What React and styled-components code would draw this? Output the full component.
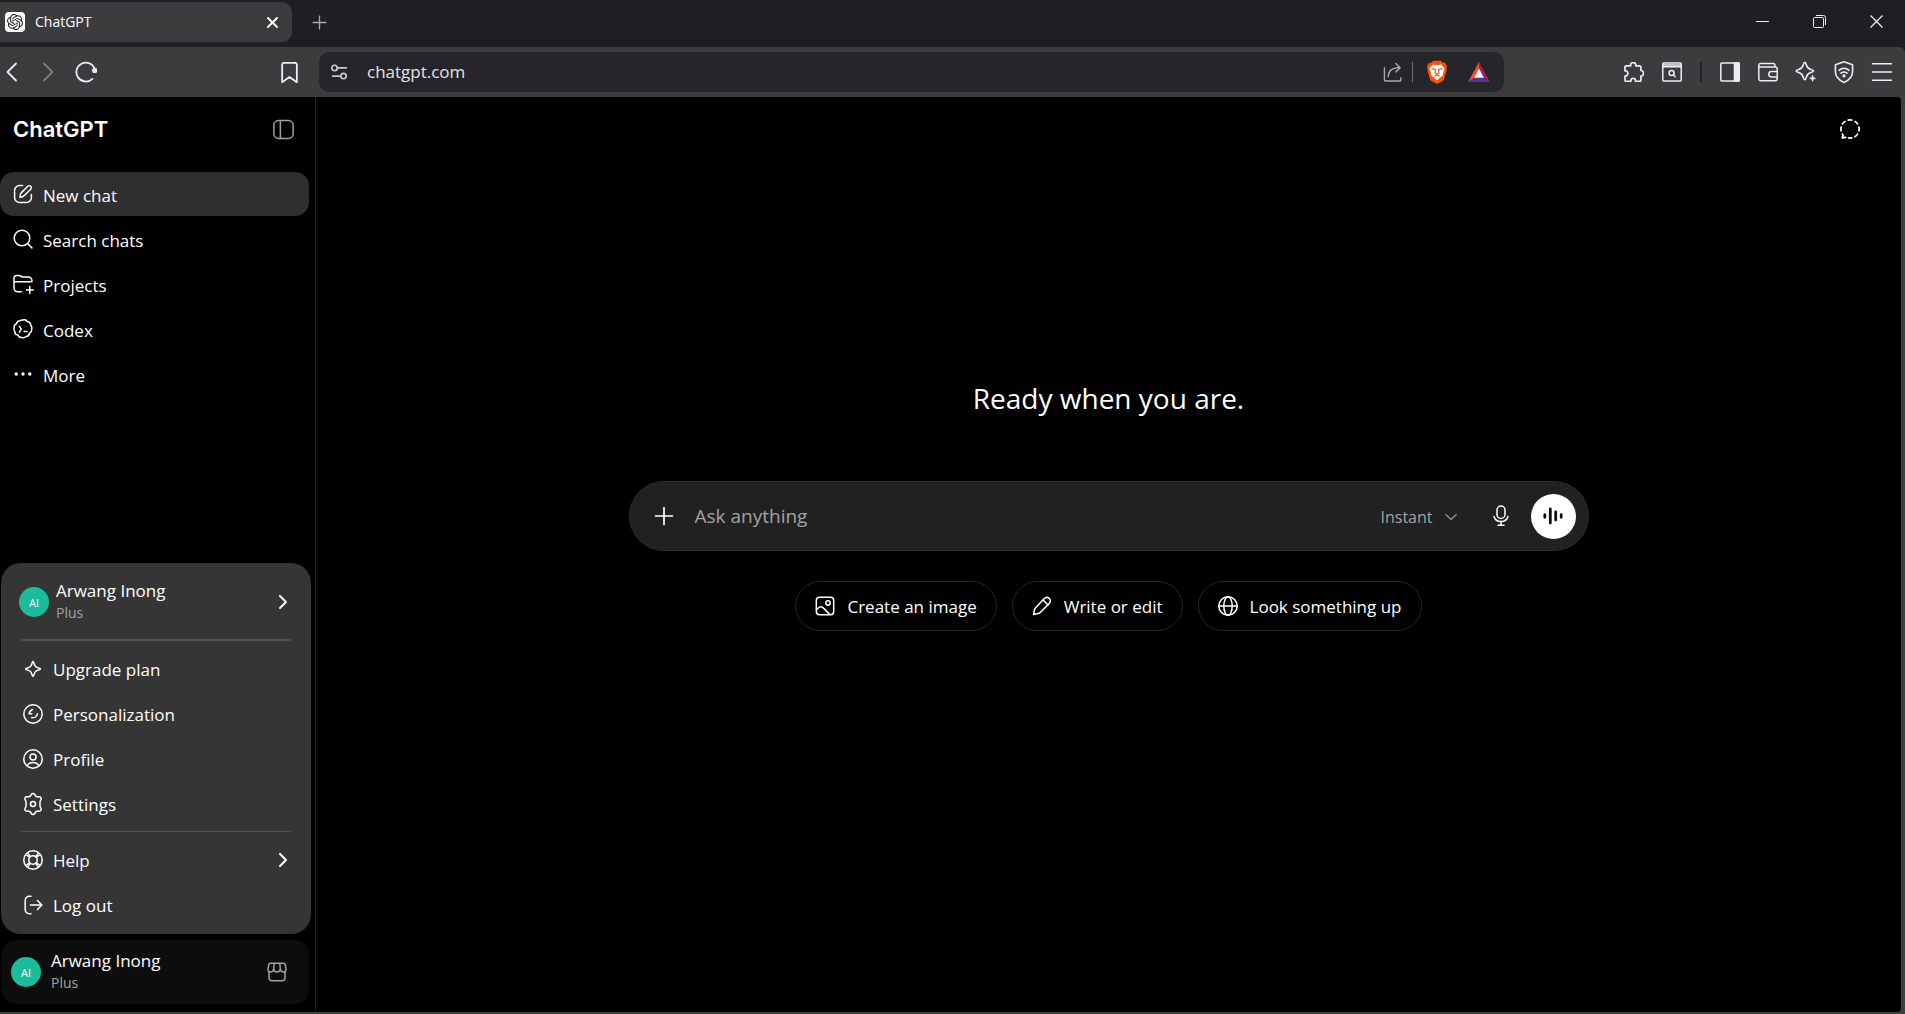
import React from "react";
import styled, { createGlobalStyle } from "styled-components";
import { SiOpenai } from "react-icons/si";

const uiFont = `"Open Sans", "Noto Sans", sans-serif`;

const GlobalStyle = createGlobalStyle`
  * { box-sizing: border-box; }
  body { margin: 0; background: #3c3b3e; font-family: ${uiFont}; color: #fff; }
  button, input, select { font: inherit; color: inherit; background: none; border: 0; padding: 0; margin: 0; outline: 0; }
  button { cursor: pointer; }
  a { color: inherit; text-decoration: none; }
  svg { display: block; flex: none; }
  h1, p { margin: 0; }
`;

/* ---------- icons ---------- */

const Line = ({ size = 20, w = 1.5, children, ...rest }) => (
  <svg width={size} height={size} viewBox="0 0 20 20" fill="none" stroke="currentColor"
    strokeWidth={w} strokeLinecap="round" strokeLinejoin="round" aria-hidden="true" {...rest}>
    {children}
  </svg>
);

const icons = {
  edit: <><path d="M9.5 1.6H6.6a5 5 0 0 0-5 5v6.8a5 5 0 0 0 5 5h6.8a5 5 0 0 0 5-5v-2.9" /><path d="M7 13.2c-.1-1.700.3-3.400 1.500-4.600l6.300-6.300a2.050 2.050 0 0 1 2.900 2.900l-6.300 6.300c-1.200 1.200-2.700 1.700-4.400 1.700z" /></>,
  search: <><circle cx="9" cy="9" r="7.800" /><path d="M14.700 14.700l4.200 4.200" /></>,
  project: <><path d="M8.500 17.800H4.700A3.700 3.700 0 0 1 1 14.100V4.200A2.600 2.600 0 0 1 3.600 1.600h2.200c2.200 0 2 1.300 4.200 1.300h5.300A3.600 3.600 0 0 1 18.900 6.500v1.300H1" /><path d="M16.800 12.600v6.800M13.400 16h6.800" /></>,
  codex: <><path d="M10 1c1.500-.6 3.500 0 4.300 1.600 1.700.3 3.400 1.600 3.500 3.600.9 1.200 1.500 2.300 1 4.100 0 1.900-.6 3-2.100 3.700-.4 1.800-1.500 3.300-3.400 3.500-1.200.9-2.900 1.600-4.400.9-1.900.1-3.300-.7-4.100-2.300-1.700-.4-3.100-1.800-3.100-3.700C.9 11.200.5 9.800 1.100 8.400 1.100 6.500 2 5.300 3.500 4.600 3.900 2.900 5.300 1.700 7.200 1.700 8 1.100 9 .8 10 1z" /><path d="M6.500 7.300l1.700 2.900-1.700 2.900M11 12.500h3" /></>,
  more: <g fill="currentColor" stroke="none"><circle cx="3.200" cy="10" r="1.700" /><circle cx="10" cy="10" r="1.700" /><circle cx="16.800" cy="10" r="1.700" /></g>,
  sidebar: <><rect x=".8" y="1.500" width="18.400" height="17" rx="4.500" /><path d="M7 1.500v17" /></>,
  spark: <path d="M10 2.500c.6 0 .9 1.700 1.600 3.500.5 1.300 1.100 1.900 2.400 2.400 1.800.7 3.500 1 3.500 1.600s-1.700.9-3.500 1.600c-1.300.5-1.900 1.100-2.400 2.400-.7 1.800-1 3.500-1.600 3.500s-.9-1.700-1.600-3.500c-.5-1.300-1.100-1.900-2.400-2.400-1.800-.7-3.500-1-3.500-1.600s1.700-.9 3.500-1.600C7.300 7.900 7.900 7.300 8.400 6c.7-1.800 1-3.500 1.600-3.500z" />,
  personal: <><circle cx="10" cy="10" r="9.200" /><path d="M9.500 5.500C8 6.200 6.300 8 6.100 9.800h2.700M14.400 9.800c-.5 2.500-2.900 4.300-5.700 4" /></>,
  profile: <><circle cx="10" cy="10" r="9.200" /><circle cx="10" cy="7.900" r="3" /><path d="M4 16.800c1.200-2.200 3.400-3.300 6-3.300s4.800 1.100 6 3.300" /></>,
  gear: <><path d="M8.300.5a2 2 0 0 1 3.400 0l.9 1.500 1.700.9 1.800-.1a2 2 0 0 1 1.800 3.100l-.9 1.600v5l.9 1.600a2 2 0 0 1-1.800 3.100l-1.800-.1-1.700.9-.9 1.500a2 2 0 0 1-3.400 0l-.9-1.500-1.700-.9-1.800.1a2 2 0 0 1-1.800-3.100l.9-1.600v-5l-.9-1.600a2 2 0 0 1 1.800-3.100l1.800.1 1.700-.9z" /><circle cx="10" cy="10" r="2.500" /></>,
  help: <><circle cx="10" cy="10" r="9.200" /><circle cx="10" cy="10" r="4.200" /><path d="M3.600 5l3.100 2.400M5 3.600l2.400 3.100M15 3.600l-2.400 3.100M16.400 5l-3.100 2.400M16.400 15l-3.100-2.400M15 16.400l-2.400-3.100M5 16.400l2.400-3.100M3.600 15l3.100-2.400" /></>,
  logout: <><path d="M8 1.300H6.200a4 4 0 0 0-4 4v9.400a4 4 0 0 0 4 4H8" /><path d="M7.500 10h11M14.500 5.600l4.300 4.400-4.300 4.400" /></>,
  store: <><path d="M2 9.500v6.200a3 3 0 0 0 3 3h10a3 3 0 0 0 3-3V9.500" /><path d="M3.600 1.300h12.800c1.200 0 1.700.7 1.900 1.800l.7 3.700c.3 1.900-1 3.300-2.500 3.300-1.700 0-3.100-1.400-3.200-3.300-.1 1.900-1.500 3.300-3.300 3.300S6.800 8.700 6.700 6.800c-.1 1.900-1.500 3.300-3.200 3.300C2 10.100.7 8.700 1 6.800l.7-3.700c.2-1.100.7-1.800 1.900-1.800zM6.700 6.800l.5-5.300M13.300 6.800l-.5-5.300" /></>,
  chevron: <path d="M7 4l6 6-6 6" />,
  down: <path d="M3.500 7l6.500 6 6.500-6" />,
  plus: <path d="M10 1.500v17M1.500 10h17" />,
  mic: <><rect x="6" y="0" width="8" height="12.400" rx="4" /><path d="M3 10.500c.8 3 3.600 5 7 5s6.200-2 7-5M10 15.500v3.700M7 19.300h6" /></>,
  voice: <g strokeWidth="2.800"><path d="M1.800 8.700v2.600M7.300 3v14M12.700 6v8M18.200 8.700v2.600" /></g>,
  image: <><rect x="1.300" y="1.300" width="17.400" height="17.400" rx="3.200" /><circle cx="13" cy="7" r="2.200" /><path d="M1.500 13.800c3.500-4 5-3.700 7.500-1.200l5.800 5.800" /></>,
  pen: <><path d="M1.500 18.500l.9-4.500c.2-1 .6-1.600 1.200-2.300l8.700-9.200c1.400-1.400 3.500-1.500 4.900-.1 1.500 1.400 1.500 3.500.1 5L8.500 16.200c-.7.700-1.400 1.100-2.300 1.300z" /><path d="M11 4l5 5" /></>,
  globe: <><circle cx="10" cy="10" r="9.200" /><ellipse cx="10" cy="10" rx="4.200" ry="9.200" /><path d="M.8 10h18.400" /></>,
  temp: <><path d="M8.200 1.100a9.200 9.200 0 0 1 3.600 0M15 2.400a9 9 0 0 1 2.600 2.500M18.900 8.200a9 9 0 0 1 0 3.700M17.600 15.100a9 9 0 0 1-2.600 2.600M11.800 18.900a9 9 0 0 1-3.200 0M5 2.400a9 9 0 0 0-2.600 2.500M1.100 8.200a9 9 0 0 0 0 3.700M2.300 15l.8 1.300-.9 2.600 3.600-.5" /></>,
  close: <path d="M3 3l14 14M17 3L3 17" />,
  back: <path d="M14 1.500L5.500 10l8.500 8.500" />,
  forward: <path d="M6 1.500l8.500 8.500L6 18.500" />,
  reload: <><path d="M15.900 16.200A8.600 8.600 0 1 1 18 7.200" /><circle cx="18" cy="8.600" r="2.400" fill="currentColor" stroke="none" /></>,
  bookmark: <path d="M3 2.500A2 2 0 0 1 5 .7h10a2 2 0 0 1 2 1.800v16.800l-7-5-7 5z" />,
  tune: <><circle cx="5" cy="5.500" r="3" /><path d="M8.500 5.500H18M3 14.500h8.500" /><circle cx="15" cy="14.500" r="3" /></>,
  share: <><path d="M1.500 5v12a2 2 0 0 0 2 2h13.300a2 2 0 0 0 2-2v-1.200" /><path d="M5.500 14.500c0-5.500 3.500-9 9.500-9.500h3M13.500.6l4.600 4.400-4.600 4.400" /></>,
  puzzle: <path d="M2.200 3.800h4.500C6.200 1.800 7.300.6 9.200.6s3 1.200 2.500 3.200h4a1.200 1.200 0 0 1 1.200 1.200v3.500c1.800.1 2.700 1.200 2.700 2.700s-.9 2.700-2.700 2.800v4.200a1.200 1.200 0 0 1-1.200 1.200h-4.200c.2-2-.6-3.100-2.300-3.100s-2.500 1.100-2.300 3.100H2.200A1.200 1.200 0 0 1 1 18.200V14c1.700.2 2.800-.9 2.800-2.600S2.700 8.700 1 8.900V5a1.200 1.200 0 0 1 1.200-1.200z" />,
  finder: <><rect x=".8" y="1" width="18.400" height="18" rx="1" /><path d="M1 4.800h18M1 3h18" /><circle cx="9.600" cy="11" r="2.500" /><path d="M11.500 13l1.700 1.800" /></>,
  panel: <><rect x=".8" y="1" width="18.400" height="18" rx="1" /><path fill="currentColor" d="M14.500 1h4.500v18h-4.500z" /></>,
  wallet: <><path d="M17 5V3.500a2 2 0 0 0-2-2H2.500A1.700 1.700 0 0 0 .8 3.200v13.600a2 2 0 0 0 2 2h14.400a2 2 0 0 0 2-2V7a2 2 0 0 0-2-2H1M19 9.500h-5.500a2.700 2.700 0 0 0 0 5.400H19" /></>,
  leo: <><path d="M8.800.2c.7 0 1 .6 1.600 2.800.8 2.900 1.600 3.600 4.400 4.400 2.200.6 2.800.9 2.800 1.600s-.6 1-2.800 1.600c-2.800.8-3.600 1.600-4.400 4.400-.6 2.200-.9 2.800-1.600 2.800s-1-.6-1.600-2.800c-.8-2.800-1.600-3.600-4.400-4.400C.6 10 0 9.700 0 9s.6-1 2.800-1.600C5.600 6.600 6.400 5.900 7.200 3 7.800.8 8.100.2 8.800.2z" /><path fill="currentColor" strokeWidth=".5" d="M16.600 13.200l.9 2.200 2.200.9-2.200.9-.9 2.200-.9-2.200-2.200-.9 2.200-.9z" /></>,
  shield: <><path d="M10-.2l8.600 3v6.700c0 5.300-3.300 8.600-8.600 10.900C4.700 18.100 1.400 14.800 1.400 9.500V2.800z" /><path d="M5 8.300c3-2.700 7-2.700 10 0M7 11.200c1.900-1.500 4.100-1.500 6 0" /><circle cx="10" cy="13.800" r=".8" fill="currentColor" /></>,
  menu: <path d="M.5 1.800h19M.5 10h19M.5 18.200h19" />,
};

const Icon = ({ name, ...rest }) => <Line {...rest}>{icons[name]}</Line>;

const BraveLogo = () => (
  <svg width="20" height="24" viewBox="0 0 20 24" aria-hidden="true">
    <path d="M6.200.8h7.600l1.800 2h2.200L20 6l-.6 2 .4 1.500-2.600 9c-.4 1.400-1.200 2.200-2.300 3L10 24l-4.900-2.500c-1.100-.8-1.900-1.600-2.300-3L.2 9.500.6 8 0 6l2.200-3.200h2.200z" fill="#fb5209" />
    <path d="M6 4.500l4 .8 4-.8 3.600 3.900-1.200 3.200-.6 3.800-3.200 2.500L10 20.500l-2.600-2.600-3.200-2.500-.6-3.800-1.200-3.200z" fill="#fff" />
    <path d="M4.600 8.600l3.900.9-.4 3.600 1.900 1 1.900-1-.4-3.600 3.900-.9M7.300 16.300L10 15l2.700 1.300" fill="none" stroke="#fb5209" strokeWidth="1.200" />
  </svg>
);

const BatLogo = () => (
  <svg width="22" height="20" viewBox="0 0 22 20" aria-hidden="true">
    <path d="M11 0L0 20l7-4.500L11 8z" fill="#ff4a2b" />
    <path d="M11 0l11 20-7-4.500L11 8z" fill="#9e1f63" />
    <path d="M0 20h22l-7-4.500H7z" fill="#5b2f9c" />
    <path d="M11 6.500L6.200 15.700h9.600z" fill="#fff" />
  </svg>
);

/* ---------- browser chrome ---------- */

const Window = styled.div`
  display: flex;
  flex-direction: column;
  height: 100vh;
  background: #1f1e23;
`;

const TabStrip = styled.div`
  display: flex;
  align-items: center;
  height: 47px;
  padding: 2px 0 5px;
`;

const Tab = styled.div`
  display: flex;
  align-items: center;
  width: 292px;
  height: 40px;
  padding: 0 13px 0 5px;
  gap: 10px;
  background: #3c3b3e;
  border-radius: 0 10px 10px 0;
  font-size: 14px;
`;

const Favicon = styled.span`
  display: grid;
  place-items: center;
  width: 20px;
  height: 20px;
  border-radius: 4px;
  background: #fff;
  color: #222;
`;

const TabTitle = styled.span`
  flex: 1;
  padding-bottom: 2px;
`;

const IconButton = styled.button`
  display: grid;
  place-items: center;
  width: ${(p) => p.$w || 38}px;
  height: ${(p) => p.$h || 38}px;
  color: ${(p) => p.$color || "#eeedf2"};
`;

const WindowControls = styled.div`
  display: flex;
  margin-left: auto;
  padding-bottom: 2px;
`;

const Toolbar = styled.div`
  display: flex;
  align-items: center;
  height: 50px;
  background: #3c3b3e;
  border-radius: 0 6px 0 0;
`;

const NavButtons = styled.div`
  display: flex;
  align-items: center;
  width: 319px;
  padding-right: 11px;
`;

const BookmarkSlot = styled.div`
  margin-left: auto;
`;

const AddressBar = styled.div`
  display: flex;
  align-items: center;
  flex: 1;
  height: 40px;
  padding: 0 6px 0 1px;
  border-radius: 10px;
  background: #262529;
`;

const AddressInput = styled.input`
  flex: 1;
  min-width: 0;
  padding: 0 0 2px 9px;
  font-size: 17px;
  color: #e4e3e8;
`;

const Divider = styled.span`
  width: ${(p) => p.$w}px;
  height: 20px;
  margin: 0 ${(p) => p.$gap}px;
  background: ${(p) => p.$color};
`;

const Extensions = styled.div`
  display: flex;
  align-items: center;
  justify-content: flex-end;
  width: 401px;
  padding-right: 4px;
`;

/* ---------- page ---------- */

const Viewport = styled.div`
  display: flex;
  flex: 1;
  min-height: 0;
  padding: 0 4px 2px 0;
  background: #3f3f41;
`;

const Page = styled.div`
  display: flex;
  flex: 1;
  border-radius: 0 4px 4px 0;
  background: #000;
`;

const Sidebar = styled.aside`
  display: flex;
  flex-direction: column;
  width: 316px;
  border-right: 1px solid #212121;
`;

const SidebarHeader = styled.div`
  display: flex;
  align-items: center;
  justify-content: space-between;
  height: 64px;
  padding: 0 13px;
`;

const Brand = styled.a`
  font-family: Inter, sans-serif;
  font-size: 22px;
  font-weight: 600;
`;

const Nav = styled.nav`
  display: flex;
  flex-direction: column;
  gap: 1px;
  padding: 11px 6px 0 0;
`;

const NavItem = styled.a`
  display: flex;
  align-items: center;
  gap: 10px;
  height: 44px;
  padding: 0 13px;
  border-radius: 14px;
  background: ${(p) => (p.$active ? "#2f2f2f" : "transparent")};
  font-size: 17px;
`;

const SidebarFooter = styled.div`
  position: relative;
  margin-top: auto;
  padding: 0 6px 8px 2px;
`;

const AccountCard = styled.button`
  display: flex;
  align-items: center;
  gap: 10px;
  width: 100%;
  height: 64px;
  padding: 0 22px 0 9px;
  border-radius: 14px;
  background: #0d0d0d;
  text-align: left;
`;

const Avatar = styled.span`
  display: grid;
  place-items: center;
  width: 30px;
  height: 30px;
  border-radius: 50%;
  background: #1abc9c;
  font-size: 11px;
`;

const Identity = styled.span`
  display: flex;
  flex-direction: column;
  flex: 1;
`;

const UserName = styled.span`
  font-size: 17px;
  line-height: 22px;
`;

const UserPlan = styled.span`
  font-size: 14px;
  line-height: 22px;
  color: #a3a3a3;
`;

const Popover = styled.div`
  position: absolute;
  bottom: 78px;
  left: 1px;
  display: flex;
  flex-direction: column;
  width: 310px;
  padding: 9px 8px 7px;
  border-radius: 20px;
  background: #353535;
`;

const PopoverAccount = styled.button`
  display: flex;
  align-items: center;
  gap: 7px;
  height: 60px;
  padding: 0 10px;
  text-align: left;
`;

const PopoverRule = styled.hr`
  width: 270px;
  height: ${(p) => p.$h}px;
  margin: ${(p) => p.$m};
  border: 0;
  background: #505050;
`;

const PopoverItem = styled.button`
  display: flex;
  align-items: center;
  gap: 10px;
  height: 45px;
  padding: 0 10px 0 14px;
  font-size: 17px;
`;

const ItemLabel = styled.span`
  flex: 1;
  padding-top: 2px;
  text-align: left;
`;

const Main = styled.main`
  display: flex;
  flex: 1;
  flex-direction: column;
`;

const MainHeader = styled.header`
  display: flex;
  align-items: center;
  justify-content: flex-end;
  height: 64px;
  padding-right: 32px;
`;

const Welcome = styled.section`
  display: flex;
  flex: 1;
  flex-direction: column;
  align-items: center;
  justify-content: center;
  padding: 0 24px 164px;
`;

const Heading = styled.h1`
  margin-bottom: 63px;
  font-size: 28px;
  font-weight: 400;
  line-height: 40px;
`;

const Composer = styled.form`
  display: flex;
  align-items: center;
  width: 100%;
  max-width: 960px;
  height: 70px;
  padding: 0 12px 0 15px;
  border: 1px solid #2c2c2c;
  border-radius: 35px;
  background: #212121;
`;

const Prompt = styled.input`
  flex: 1;
  min-width: 0;
  padding-left: 12px;
  font-size: 19px;
  &::placeholder { color: #a3a3a3; opacity: 1; }
`;

const ModelPicker = styled.label`
  display: flex;
  align-items: center;
  gap: 9px;
  margin-right: 23px;
  padding-top: 2px;
  color: #a3a3a3;
`;

const ModelSelect = styled.select`
  appearance: none;
  font-size: 16px;
`;

const VoiceButton = styled.button`
  display: grid;
  place-items: center;
  width: 45px;
  height: 45px;
  margin-left: 11px;
  border-radius: 50%;
  background: #fff;
  color: #0d0d0d;
`;

const Suggestions = styled.div`
  display: flex;
  gap: 15px;
  margin-top: 30px;
`;

const Chip = styled.button`
  display: flex;
  align-items: center;
  gap: 12px;
  height: 50px;
  padding: 0 19px;
  border: 1px solid #262626;
  border-radius: 25px;
  font-size: 17px;
`;

const navItems = [
  ["edit", "New chat"],
  ["search", "Search chats"],
  ["project", "Projects"],
  ["codex", "Codex"],
  ["more", "More"],
];

const accountItems = [
  ["spark", "Upgrade plan"],
  ["personal", "Personalization"],
  ["profile", "Profile"],
  ["gear", "Settings"],
];

const suggestions = [
  ["image", "Create an image"],
  ["pen", "Write or edit"],
  ["globe", "Look something up"],
];

const extensionIcons = [
  ["leo", "Leo AI"],
  ["shield", "VPN"],
  ["menu", "Menu"],
];

const User = () => (
  <Identity>
    <UserName>Arwang Inong</UserName>
    <UserPlan>Plus</UserPlan>
  </Identity>
);

function BrowserChrome() {
  return (
    <>
      <TabStrip>
        <Tab>
          <Favicon><SiOpenai size={16} /></Favicon>
          <TabTitle>ChatGPT</TabTitle>
          <IconButton $w={14} aria-label="Close tab" $color="#fff"><Icon name="close" size={13} w={3} /></IconButton>
        </Tab>
        <IconButton $w={54} aria-label="New tab" $color="#a9a8ad"><Icon name="plus" size={15} w={1.800} /></IconButton>
        <WindowControls>
          <IconButton $w={57} aria-label="Minimize">
            <svg width="13" height="13"><path d="M0 6.500h13" stroke="currentColor" /></svg>
          </IconButton>
          <IconButton $w={57} aria-label="Restore">
            <svg width="13" height="13" fill="none" stroke="currentColor"><rect x=".5" y="2.500" width="10" height="10" rx="1" /><path d="M3 .5h7.500a2 2 0 0 1 2 2V10" /></svg>
          </IconButton>
          <IconButton $w={57} aria-label="Close window">
            <svg width="13" height="13" stroke="currentColor" strokeWidth="1.300"><path d="M.5.5l12 12M12.500.5l-12 12" /></svg>
          </IconButton>
        </WindowControls>
      </TabStrip>
      <Toolbar>
        <NavButtons>
          <IconButton $w={24} aria-label="Back"><Icon name="back" w={1.800} /></IconButton>
          <IconButton $w={48} aria-label="Forward" $color="#7d7c80"><Icon name="forward" w={1.800} /></IconButton>
          <IconButton $w={28} aria-label="Reload"><Icon name="reload" size={22} w={1.600} /></IconButton>
          <BookmarkSlot>
            <IconButton aria-label="Bookmark"><Icon name="bookmark" size={21} w={1.700} /></IconButton>
          </BookmarkSlot>
        </NavButtons>
        <AddressBar>
          <IconButton aria-label="Site settings" $color="#c9c8cd"><Icon name="tune" size={18} w={1.900} /></IconButton>
          <AddressInput aria-label="Address" defaultValue="chatgpt.com" />
          <IconButton aria-label="Share" $color="#a9a8ad"><Icon name="share" size={19} w={1.500} /></IconButton>
          <Divider $w={1} $gap={1} $color="#6f6e73" />
          <IconButton $w={46} aria-label="Brave Shields"><BraveLogo /></IconButton>
          <IconButton aria-label="Brave Rewards"><BatLogo /></IconButton>
        </AddressBar>
        <Extensions>
          <IconButton aria-label="Extensions"><Icon name="puzzle" w={1.700} /></IconButton>
          <IconButton aria-label="Search tabs"><Icon name="finder" w={1.500} /></IconButton>
          <Divider $w={2} $gap={9} $color="#232227" />
          <IconButton aria-label="Side panel"><Icon name="panel" w={1.500} /></IconButton>
          <IconButton aria-label="Wallet"><Icon name="wallet" w={1.500} /></IconButton>
          {extensionIcons.map(([name, label]) => (
            <IconButton key={name} aria-label={label}><Icon name={name} w={1.600} overflow="visible" /></IconButton>
          ))}
        </Extensions>
      </Toolbar>
    </>
  );
}

function AccountPopover() {
  return (
    <Popover>
      <PopoverAccount>
        <Avatar>AI</Avatar>
        <User />
        <Icon name="chevron" w={2} />
      </PopoverAccount>
      <PopoverRule $h={2} $m="7px 12px 5px" />
      {accountItems.map(([icon, label]) => (
        <PopoverItem key={label}><Icon name={icon} overflow="visible" /><ItemLabel>{label}</ItemLabel></PopoverItem>
      ))}
      <PopoverRule $h={1} $m="5px 12px" />
      <PopoverItem><Icon name="help" overflow="visible" /><ItemLabel>Help</ItemLabel><Icon name="chevron" w={2} /></PopoverItem>
      <PopoverItem><Icon name="logout" /><ItemLabel>Log out</ItemLabel></PopoverItem>
    </Popover>
  );
}

export default function App() {
  return (
    <Window>
      <GlobalStyle />
      <BrowserChrome />
      <Viewport>
        <Page>
          <Sidebar>
            <SidebarHeader>
              <Brand href="#">ChatGPT</Brand>
              <IconButton aria-label="Close sidebar" $color="#a3a3a3"><Icon name="sidebar" w={1.400} size={21} /></IconButton>
            </SidebarHeader>
            <Nav>
              {navItems.map(([icon, label], i) => (
                <NavItem key={label} href="#" $active={i === 0}><Icon name={icon} overflow="visible" /><ItemLabel>{label}</ItemLabel></NavItem>
              ))}
            </Nav>
            <SidebarFooter>
              <AccountPopover />
              <AccountCard>
                <Avatar>AI</Avatar>
                <User />
                <Icon name="store" color="#a3a3a3" />
              </AccountCard>
            </SidebarFooter>
          </Sidebar>
          <Main>
            <MainHeader>
              <IconButton aria-label="Temporary chat" $color="#fff"><Icon name="temp" w={1.700} /></IconButton>
            </MainHeader>
            <Welcome>
              <Heading>Ready when you are.</Heading>
              <Composer onSubmit={(e) => e.preventDefault()}>
                <IconButton type="button" aria-label="Add files" $color="#fff"><Icon name="plus" w={1.700} /></IconButton>
                <Prompt aria-label="Message" placeholder="Ask anything" />
                <ModelPicker>
                  <ModelSelect aria-label="Model"><option>Instant</option></ModelSelect>
                  <Icon name="down" size={16} w={1.600} />
                </ModelPicker>
                <IconButton type="button" aria-label="Dictate" $w={38} $color="#fff"><Icon name="mic" w={1.500} overflow="visible" /></IconButton>
                <VoiceButton type="button" aria-label="Use voice"><Icon name="voice" /></VoiceButton>
              </Composer>
              <Suggestions>
                {suggestions.map(([icon, label]) => (
                  <Chip key={label}><Icon name={icon} />{label}</Chip>
                ))}
              </Suggestions>
            </Welcome>
          </Main>
        </Page>
      </Viewport>
    </Window>
  );
}
